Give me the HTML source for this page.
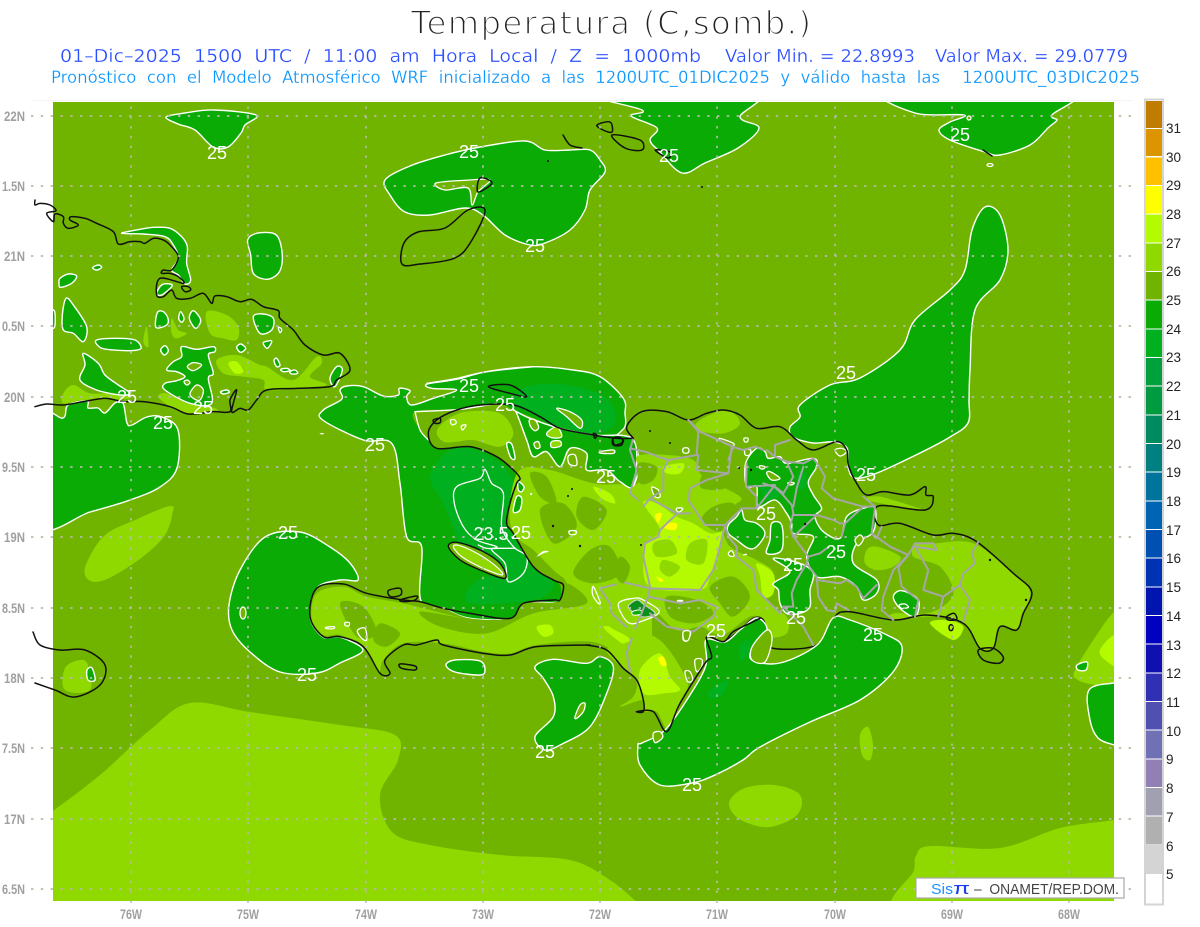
<!DOCTYPE html>
<html><head><meta charset="utf-8"><title>Temperatura</title>
<style>
html,body{margin:0;padding:0;background:#fff;width:1200px;height:927px;overflow:hidden}
svg{display:block}
text{font-family:"Liberation Sans",sans-serif}
.st text{font-family:"DejaVu Sans","Liberation Sans",sans-serif;white-space:pre}
polygon,polyline,circle,ellipse,path{vector-effect:non-scaling-stroke;stroke-linejoin:round;stroke-linecap:round}
.c{fill:#0aab05;stroke:#fff;stroke-width:1.4}
.h{fill:#70b400;stroke:#fff;stroke-width:1.3}
.s{fill:#00b01e;stroke:none}
.o{fill:#70b400;stroke:none}
.l{fill:#8fd900;stroke:none}
.b{fill:#b4fa00;stroke:none}
.y{fill:#ffff00;stroke:none}
.w{fill:none;stroke:#fff;stroke-width:1.3}
.k{fill:none;stroke:#111;stroke-width:1.5}
.g{fill:none;stroke:#a6a6a6;stroke-width:2}
.ax{fill:#a0a0a0;font-size:13.5px;font-weight:bold}
.cb{fill:#222;font-size:13.5px}
.lb{fill:#fff;font-size:18px;text-anchor:middle}
.dot{stroke:#b5bba8;stroke-width:1.7;stroke-dasharray:2.4 7.4;fill:none}
</style></head><body>
<svg width="1200" height="927" viewBox="0 0 1200 927" xmlns="http://www.w3.org/2000/svg">
<defs><clipPath id="p"><rect x="53" y="102" width="1061" height="799"/></clipPath></defs>

<!-- titles -->
<g class="st">
<text x="411" y="34" font-size="32" fill="#222" stroke="#fff" stroke-width="1.4" textLength="400" lengthAdjust="spacing">Temperatura (C,somb.)</text>
<g font-size="18" fill="#2a4dff" stroke="#fff" stroke-width=".3">
<text x="60" y="62" textLength="641" lengthAdjust="spacingAndGlyphs">01–Dic–2025  1500  UTC  /  11:00  am  Hora  Local  /  Z  =  1000mb</text>
<text x="725" y="62" textLength="190" lengthAdjust="spacingAndGlyphs">Valor Min. = 22.8993</text>
<text x="935" y="62" textLength="193" lengthAdjust="spacingAndGlyphs">Valor Max. = 29.0779</text>
</g>
<g font-size="16.5" fill="#0a96ff" stroke="#fff" stroke-width=".25">
<text x="51" y="83" textLength="889" lengthAdjust="spacingAndGlyphs">Pronóstico  con  el  Modelo  Atmosférico  WRF  inicializado  a  las  1200UTC_01DIC2025  y  válido  hasta  las</text>
<text x="962" y="83" textLength="178" lengthAdjust="spacingAndGlyphs">1200UTC_03DIC2025</text>
</g>
</g>

<line x1="33" y1="100.5" x2="1132" y2="100.5" stroke="#f3f3f3"/>

<g clip-path="url(#p)">
<rect x="53" y="102" width="1061" height="799" fill="#70b400"/>
<!-- broad warm areas -->
<polygon class="l" points="40,820 53,811 100,775 150,730 190,703 250,712 340,725 395,735 398,760 380,795 392,832 430,845 500,855 570,860 610,880 640,905 650,915 40,915"/>
<polygon class="l" points="905,915 914,870 916,856 930,846 1000,848 1060,828 1114,820 1130,815 1130,915"/>
<polygon class="l" points="85,575 88,560 105,535 135,520 170,506 172,515 165,535 145,555 115,575 95,582"/>
<polygon class="l" points="730,800 745,788 775,785 800,795 797,815 770,827 745,822 732,812"/>
<polygon class="l" points="860,735 868,727 873,745 870,760 862,755"/>
<polygon class="l" points="1075,670 1100,630 1114,612 1130,600 1130,690 1095,685 1078,680"/>
<polygon class="b" points="1100,650 1114,635 1125,640 1125,670 1105,660"/>
<polygon class="l" points="65,668 80,660 88,665 90,690 65,690"/>

<!-- open-sea contour blobs -->
<polygon class="c" points="166,117 185,113 214,110 256,115 245,125 241,133 228,147 213,147 195,130 178,124"/>
<polygon class="c" points="385,180 410,166 445,155 480,147 525,141 545,150 570,150 590,150 600,160 605,172 590,190 585,210 570,230 545,243 530,245 505,235 483,215 465,208 430,215 405,212 390,195"/>
<polygon class="h" points="436,183 470,180 490,180 478,192 472,205 468,188 445,190"/>
<polygon class="c" points="590,92 642,110 631,116 657,128 650,140 660,152 682,173 705,163 738,148 759,128 740,117 753,92"/>
<polygon class="c" points="890,92 915,113 964,115 950,122 939,130 950,140 985,152 1000,155 1030,145 1048,128 1057,120 1052,115 1068,92"/>
<circle class="h" cx="969" cy="118" r="2"/>
<ellipse class="h" cx="990" cy="165" rx="3" ry="1.5"/>
<polygon class="c" points="848,467 855,478 877,473 920,453 950,437 968,423 969,400 970,370 975,310 1000,280 1008,250 1000,215 985,207 972,230 965,270 950,290 915,320 900,350 860,378 830,385 800,405 800,417 790,427 793,437 813,443 833,442 847,448"/>
<polygon class="c" points="40,418 63,418 68,405 87,401 88,408 98,408 105,413 115,403 123,403 127,423 132,425 147,417 162,417 178,430 177,468 160,487 130,500 90,512 40,525"/>
<polygon class="c" points="300,532 330,547 350,563 358,580 340,580 317,588 310,617 323,637 340,637 363,650 340,663 317,673 280,672 250,652 232,630 229,605 240,570 265,537"/>
<ellipse class="h" cx="243" cy="613" rx="3" ry="6"/>
<polygon class="c" points="446,665 455,660 480,661 485,670 480,675 455,672"/>
<polygon class="c" points="1089,690 1114,683 1130,683 1130,750 1114,745 1098,738 1090,720"/>
<polygon class="c" points="1077,665 1087,662 1086,670 1078,670"/>
<polygon class="c" points="87,670 92,668 95,680 88,680"/>

<!-- Western Cuba area -->
<g transform="translate(30,190) scale(.33333)">
<polygon class="l" points="530,365 590,375 625,410 620,450 580,445 540,430"/>
<polygon class="l" points="425,385 445,420 470,430 440,445 425,430"/>
<polygon class="l" points="350,410 355,470 340,455"/>
<polygon class="l" points="560,510 620,495 690,525 710,530 790,570 860,500 875,520 840,560 890,585 800,595 710,600 700,570 640,560 580,550"/>
<polygon class="b" points="595,520 620,515 640,545 615,550"/>
<polygon class="l" points="100,610 130,585 180,610 250,610 300,625 160,630 100,640"/>
<polygon class="l" points="385,620 410,610 470,640 540,650 560,665 470,672 420,650"/>
<polygon class="c" points="275,130 320,120 370,112 420,115 455,140 472,170 470,220 482,270 465,282 445,255 425,240 445,205 430,165 405,140 340,132"/>
<polygon class="c" points="653,150 680,130 730,130 750,155 757,210 745,250 710,268 670,250 662,195"/>
<polygon class="c" points="90,265 115,252 140,258 125,280 92,292 87,280"/>
<polygon class="c" points="188,233 205,225 215,232 200,240"/>
<polygon class="c" points="97,375 108,325 130,345 170,410 160,455 130,430 100,420"/>
<polygon class="c" points="200,450 260,445 315,450 333,475 300,482 230,478 205,468"/>
<polygon class="c" points="378,412 382,368 400,365 414,385 410,405"/>
<polygon class="c" points="452,365 462,385 455,397 446,385"/>
<polygon class="c" points="490,362 512,390 497,415 478,385"/>
<polygon class="c" points="392,480 405,467 415,482 403,495"/>
<polygon class="c" points="455,470 500,478 550,470 555,485 535,495 550,550 535,565 545,640 480,640 405,600 405,580 440,572 465,560 440,545 410,540 430,515 455,500"/>
<polygon class="h" points="472,530 490,518 515,525 490,542"/>
<polygon class="h" points="480,610 500,585 520,600 510,630 490,625"/>
<polygon class="h" points="462,575 472,570 480,578 470,585"/>
<polygon class="c" points="572,605 590,600 598,607 580,612"/>
<polygon class="c" points="620,472 632,462 647,475 632,487"/>
<polygon class="c" points="670,380 700,372 730,385 725,420 690,430"/>
<polygon class="c" points="745,412 755,418 750,428"/>
<polygon class="c" points="700,458 725,453 712,475"/>
<polygon class="c" points="732,512 740,505 750,525 740,530"/>
<polygon class="c" points="752,538 770,535 780,542 760,545"/>
<polygon class="c" points="780,545 795,540 803,550 785,552"/>
<polygon class="c" points="900,565 920,530 937,540 915,590"/>
<polygon class="c" points="380,310 395,285 420,282 425,290 395,315"/>
<polygon class="c" points="160,490 205,520 225,555 265,585 300,610 270,615 200,600 150,570 165,525"/>
<polygon class="c" points="60,365 74,365 74,410 60,410"/>
</g>

<!-- Haiti + gulf -->
<g transform="translate(300,370) scale(.33333)">
<polygon class="c" points="68,150 70,120 125,88 120,60 140,48 190,50 250,78 295,75 298,55 330,62 320,80 335,105 400,85 470,60 395,55 382,42 470,28 560,5 700,-10 820,0 900,20 970,85 975,130 975,170 945,205 1000,210 1000,350 800,650 782,695 670,700 640,745 510,745 430,715 362,690 365,530 320,500 300,340 275,220 190,210"/>
<polygon class="s" points="640,100 680,50 800,45 920,85 945,160 880,190 780,170 700,130"/>
<polygon class="s" points="390,320 450,240 530,240 610,290 640,350 620,450 680,560 760,640 700,690 510,700 510,650 560,620 610,620 540,590 440,530 470,510 430,400"/>
<polygon class="w" points="470,350 540,325 555,298 575,340 610,370 605,470 640,530 680,560 670,610 625,635 615,580 575,540 590,530 530,510 490,470 463,400"/>
<polyline class="w" points="535,525 560,535 600,535 645,535"/>
<polygon class="h" points="770,115 810,125 845,150 840,175 800,140"/>
<polygon fill="#70b400" stroke="none" points="345,125 480,118 590,100 640,120 690,140 780,175 880,195 1000,210 1010,300 990,370 1030,400 1010,500 945,520 985,540 1000,630 1050,650 1050,960 1000,960 960,860 870,825 710,830 630,855 550,850 430,825 410,810 310,825 255,870 270,910 240,910 190,830 120,800 70,800 30,740 50,655 130,642 200,670 310,690 360,695 430,715 510,745 630,745 670,700 770,695 782,650 760,630 700,590 640,490 620,460 630,400 650,340 640,300 590,260 510,230 410,235 385,210 360,180"/>
<polyline class="w" points="345,125 480,118 590,100"/>
<polyline class="w" points="345,125 360,180 385,210"/>
<polygon class="l" points="410,185 440,150 500,125 600,130 640,190 600,230 520,210 470,215 430,215"/>
<polygon class="l" points="660,300 750,300 880,340 1000,350 1040,420 1020,500 945,520 985,540 1000,630 1050,650 1050,900 1000,900 950,850 870,815 710,825 630,850 550,845 430,820 310,820 250,870 235,905 190,830 120,795 70,795 35,745 50,670 130,650 200,680 310,700 500,745 640,755 700,705 780,700 800,640 760,600 700,540 640,490 630,400"/>
<polygon class="o" points="360,725 500,745 640,755 700,705 780,700 800,640 860,700 700,730 560,790 420,770"/>
<polygon class="o" points="720,420 790,400 830,470 760,520"/>
<polygon class="o" points="850,380 920,420 880,480 830,440"/>
<polygon class="o" points="120,700 190,710 230,790 170,800"/>
<polygon class="o" points="690,310 740,320 770,400 720,380"/>
<polygon class="o" points="870,540 930,530 960,610 880,640 820,610"/>
<polygon class="o" points="240,760 300,790 260,830 220,810"/>
<polygon class="b" points="710,770 750,765 760,790 730,800"/>
<polygon class="b" points="880,350 930,370 945,400 905,385"/>
<polygon class="b" points="910,770 1000,790 1030,840 980,830"/>
<polygon class="c" points="640,120 690,145 780,175 880,195 1000,210 1000,345 960,335 920,300 860,300 860,250 810,235 780,290 740,245 700,260 680,210 650,130"/>
<polygon class="h" points="688,150 705,150 716,172 705,182 692,170"/>
<polygon class="h" points="702,220 715,215 720,232 708,235"/>
<polygon class="l" style="stroke:#fff;stroke-width:1.3" points="740,190 770,170 785,200 755,203"/>
<polygon class="l" style="stroke:#fff;stroke-width:1.3" points="755,215 780,213 782,228 755,232"/>
<polygon class="h" points="805,258 825,255 830,285 808,282"/>
<polygon class="h" points="900,245 940,240 940,250 905,250"/>
<polygon class="c" points="620,222 635,222 645,265 632,262"/>
<polygon class="c" points="655,335 672,350 665,365 655,360"/>
<polygon class="c" points="650,380 665,385 660,420 640,425"/>
<polygon class="w" points="452,150 465,150 468,160 455,164"/>
<polygon class="w" points="484,168 498,165 488,180"/>
<polygon class="w" points="135,758 148,758 146,768 135,766"/>
<polygon class="w" points="78,772 102,770 100,776 80,776"/>
<polygon class="w" points="172,782 195,775 200,810 185,805"/>
<polygon class="w" points="808,483 828,483 826,493 810,493"/>
<polygon fill="#fff" points="710,560 730,543 747,545 730,550"/>
<polygon fill="#fff" points="690,370 697,370 693,376"/>
<polygon fill="#fff" points="60,190 70,189 70,193 60,192"/>
<polygon class="w" points="880,650 900,695 895,700 878,675"/>
<polyline class="w" points="380,40 470,25 560,5 700,-10"/>
<!-- Gonave -->
<polygon fill="#70b400" stroke="#111" stroke-width="1.4" points="445,530 470,517 540,540 600,580 615,625 540,600 480,570"/>
<polygon class="l" style="stroke:#fff;stroke-width:1.2" points="460,530 480,527 540,555 595,595 605,615 545,593 485,560"/>
<!-- coast -->
<polyline class="k" points="1000,205 950,205 880,195 780,175 720,140 640,105 540,105 470,120 410,150 385,190 410,235 510,230 590,260 640,300 660,325 650,340 630,400 620,460 640,490 700,590 760,630 790,645 780,690 760,690 670,700 630,745 510,730 430,715 360,695 310,690 200,670 130,642 50,655 30,740 70,800 120,800 190,830 240,910 270,910 255,870 310,825 350,825 410,810 430,825 550,850 630,855 710,830 870,825"/>
<polygon class="k" points="565,50 630,45 680,80 630,70"/>
<polygon class="k" points="265,662 300,655 302,675 272,680"/>
<polygon class="k" points="300,690 350,678 345,690 315,695"/>
<polygon class="k" points="300,882 345,888 345,900 305,895"/>
<polygon class="k" points="400,150 420,145 420,158 405,160"/>
<polygon class="k" points="940,205 965,205 965,225 940,225"/>
<polygon class="k" points="880,190 890,195 885,205"/>
<!-- Border Haiti/DR -->
<polyline class="g" points="1000,205 990,240 1010,300 990,370 1030,400 1010,500 945,520 985,540 1000,630 900,655 930,700 935,730 1000,790 985,850 1020,960"/>
</g>

<!-- Dominican Rep -->
<g transform="translate(600,400) scale(.33333)">
<polygon class="l" points="95,270 130,230 110,170 200,165 280,180 310,230 420,290 400,320 370,375 390,440 470,480 520,520 500,600 560,650 560,700 510,710 490,660 450,650 380,700 340,700 300,680 230,690 160,630 80,600 50,550 85,490 45,430 85,390 125,320"/>
<polygon class="o" points="305,360 340,320 400,310 390,360 355,395"/>
<polygon class="o" points="330,560 400,530 450,590 400,650 360,610"/>
<polygon class="o" points="115,190 170,200 160,240 120,250"/>
<polygon class="o" points="200,590 290,600 340,640 280,670 210,650"/>
<polygon class="o" points="60,470 90,500 70,550 45,520"/>
<polygon class="o" points="320,215 400,250 350,270 300,260"/>
<polygon class="b" points="130,310 170,310 230,350 280,370 330,400 370,400 350,470 330,530 300,570 150,560 130,470 135,430 180,390"/>
<polygon class="b" points="190,200 250,190 240,220 200,220"/>
<polygon class="b" points="470,490 480,530 490,590 520,580 520,520"/>
<polygon class="l" points="190,480 240,500 210,530 180,510"/>
<polygon class="l" points="270,430 320,420 310,490 260,480"/>
<polygon class="l" points="160,430 210,420 230,460 170,470"/>
<polygon class="y" points="165,345 185,340 175,370"/>
<polygon class="y" points="195,370 230,370 225,390 195,385"/>
<polygon class="y" points="170,530 190,540 180,545"/>
<polygon class="l" points="300,60 380,30 420,70 370,100 290,90"/>
<polygon class="l" points="800,300 840,290 970,330 900,320"/>
<polygon class="l" points="800,450 830,440 900,470 880,500 830,510 795,490"/>
<polygon class="l" points="950,430 1000,430 1120,430 1240,520 1290,575 1270,640 1250,690 1200,680 1180,740 1140,745 1090,670 990,650 880,660 880,640 980,640 1040,610 1060,570 1020,500 940,470"/>
<polygon class="b" points="990,670 1040,660 1090,680 1060,720"/>
<!-- green interiors -->
<polygon class="c" points="437,190 470,145 495,155 505,175 540,170 560,190 640,175 650,200 625,245 640,285 665,325 645,350 670,395 720,415 740,350 790,325 825,325 820,395 770,430 760,490 830,540 830,580 790,600 770,560 720,530 650,530 620,470 640,410 580,400 575,370 560,340 525,300 475,320 470,260 440,260"/>
<polygon class="s" points="480,260 520,255 540,285 500,300"/>
<polygon class="s" points="590,230 610,210 620,250 600,270"/>
<polygon class="c" points="385,375 410,350 425,330 435,360 470,370 495,400 470,440 445,445 410,420 385,400"/>
<polygon class="c" points="515,370 545,375 545,450 500,460 510,420"/>
<polygon class="c" points="520,475 600,490 640,520 630,570 630,620 600,640 560,640 540,610 535,570 520,550 570,515"/>
<polygon class="c" points="880,590 905,572 955,600 945,650 900,625"/>
<polygon class="w" points="898,615 915,612 925,622 905,625"/>
<polygon class="h" points="765,420 780,405 790,418 775,437"/>
<polygon class="h" points="705,150 725,145 740,155 720,168"/>
<polygon class="h" points="510,215 540,235 515,240 500,220"/>
<polygon class="h" points="480,197 495,200 490,207 480,205"/>
<polygon class="h" points="565,248 582,248 578,254 566,254"/>
<polygon class="h" points="360,115 400,130 395,138 365,125"/>
<polygon class="h" points="250,145 265,145 265,158 250,158"/>
<polygon class="h" points="432,115 444,115 442,125 434,125"/>
<polygon class="h" points="155,262 175,270 180,290 165,290"/>
<polygon class="h" points="230,325 248,325 240,335 232,334"/>
<polygon class="h" points="385,460 395,452 402,468 390,468"/>
<polygon class="h" points="250,700 262,690 272,700 262,722 250,720"/>
<polygon class="h" points="435,150 452,150 448,165 436,165"/>
<polygon fill="#fff" points="430,463 440,461 440,465 430,466"/>
<polygon fill="#fff" points="232,600 248,600 248,605 232,605"/>
<!-- Lake Enriquillo -->
<polygon class="l" style="stroke:#fff;stroke-width:1.3" points="55,612 100,595 130,600 178,635 130,662 85,668"/>
<polygon points="85,622 110,600 130,612 165,640 125,650" fill="#0b8f1c" stroke="#c8d8c0" stroke-width="1.2"/>
<polygon points="97,635 120,630 125,642 100,645" fill="#0aab05" stroke="#fff" stroke-width="1"/>
<!-- north-east white contour & coast -->
<polygon class="k" points="1040,650 1062,640 1070,658 1045,660"/>
<ellipse class="k" cx="1053" cy="683" rx="6" ry="9"/>
<polygon class="k" points="1135,750 1180,745 1210,772 1195,790 1150,780"/>
<polygon class="k" points="40,115 60,112 70,125 45,135"/>
<polyline class="k" points="100,115 80,80 125,35 200,35 265,60 320,40 370,30 420,45 470,85 540,80 590,120 640,150 710,125 740,150 745,195 770,250 800,285 850,275 930,285 975,260 978,285 1000,290 975,330 835,318 835,375 900,370 1000,405 1060,400 1130,425 1240,520 1295,575 1270,640 1250,690 1200,680 1180,745 1140,745 1090,670 980,645 880,660 745,635 700,655 650,735 520,745 505,710 490,660 460,655 420,690 375,725"/>
<!-- provinces -->
<polyline class="g" points="90,145 135,155 175,170 205,180 290,165 295,95 265,60"/>
<polyline class="g" points="205,180 190,210 190,270 150,295 130,320"/>
<polyline class="g" points="295,165 290,210 385,220 395,140 430,150 465,140 490,150"/>
<polyline class="g" points="265,60 300,95 400,140 385,180"/>
<polyline class="g" points="385,220 320,240 270,265 265,300 315,375 375,375"/>
<polyline class="g" points="150,295 230,340 270,340"/>
<polyline class="g" points="232,340 180,390 175,410 135,430 130,470 150,560 145,590 100,700 75,810"/>
<polyline class="g" points="150,565 300,570 340,510 360,440 375,375"/>
<polyline class="g" points="375,375 385,410 410,440 410,470 460,510 470,570 540,640 550,620 610,680 640,735"/>
<polyline class="g" points="75,548 150,565"/>
<polyline class="g" points="145,590 240,610 300,600 350,620 340,650 280,695 250,690 200,680 150,640"/>
<polyline class="g" points="375,375 425,325 470,325 525,255 440,260 470,290 470,325"/>
<polyline class="g" points="440,190 438,260"/>
<polyline class="g" points="490,250 525,262 545,280 575,315 580,340 570,380 580,410 610,450 625,470 620,490 590,540 575,580 580,620 550,620"/>
<polyline class="g" points="500,150 525,170 525,135 570,120"/>
<polyline class="g" points="525,170 560,185 610,190 640,175 655,195 675,230 665,265 700,295 790,320 820,320"/>
<polyline class="g" points="610,200 590,265 580,320"/>
<polyline class="g" points="525,260 550,280 580,230 560,185"/>
<polyline class="g" points="580,345 650,345 700,360 720,370 735,370 790,320"/>
<polyline class="g" points="650,345 580,410"/>
<polyline class="g" points="735,370 725,410"/>
<polyline class="g" points="790,290 825,320 815,400 870,440 925,465 880,510 850,590 845,630 880,660"/>
<polyline class="g" points="815,400 830,415 845,380"/>
<polyline class="g" points="625,470 660,460 680,445"/>
<polyline class="g" points="620,490 650,530 655,590 680,630 705,635 710,610 745,630"/>
<polyline class="g" points="650,540 720,550 740,540 770,560 790,595 830,555"/>
<polyline class="g" points="925,465 895,500 905,560 955,600 945,650"/>
<polyline class="g" points="925,465 945,430 1000,430 1010,450 945,440 985,510 970,570 1030,590 1015,650"/>
<polyline class="g" points="1030,590 1080,555 1110,600 1090,665"/>
<polyline class="g" points="1080,555 1090,520 1125,490 1115,460 1135,425"/>
</g>

<!-- South of Barahona + blobs -->
<g transform="translate(520,600) scale(.33333)">
<polygon class="l" points="270,80 350,90 430,130 500,240 490,290 445,385 410,335 370,335 370,300 300,320 340,290 350,240 310,205 260,150 330,120"/>
<polygon class="b" points="360,210 420,160 450,230 480,270 430,280 370,280"/>
<polygon class="y" points="415,175 430,170 440,195 425,197"/>
<polygon class="c" points="45,200 100,178 200,190 240,170 280,200 260,280 210,380 130,430 75,450 45,410 100,350 100,290 70,235"/>
<polygon class="h" points="165,350 180,315 195,310 190,335 170,355"/>
<polygon class="h" points="495,215 510,215 518,240 503,245"/>
<polygon class="h" points="525,180 545,178 545,200 530,215"/>
<polygon class="h" points="490,95 510,95 505,120 492,120"/>
<polyline class="g" points="335,115 320,160 330,215"/>
</g>
<polygon class="c" points="706,640 725,642 740,630 757,618 767,630 753,647 752,660 780,663 817,645 833,618 850,620 887,635 902,647 893,672 860,700 810,722 760,747 743,760 715,775 692,783 660,785 640,765 638,745 642,743 665,730 690,695 706,665"/>
<polygon class="s" points="740,645 750,640 748,655 740,660"/>
<polygon class="s" points="710,690 728,680 722,695 710,698"/>
<polygon class="h" points="752,647 767,630 772,640 765,662 752,660"/>
<g transform="translate(520,600) scale(.33333)">
<polygon class="h" points="400,400 420,395 428,412 405,428"/>
<polyline class="k" points="200,135 260,150 310,205 350,240 370,300 370,335 350,335 400,335 440,395 480,310 555,190 575,170 560,110 610,125 640,95 700,65 720,55"/>
</g>

<!-- dots (small black lakes) -->
<g fill="#111">
<circle cx="548" cy="161" r="1"/><circle cx="702" cy="187" r="1"/><circle cx="572" cy="489" r="1"/>
<circle cx="580" cy="546" r="1.2"/><circle cx="568" cy="496" r="1"/><circle cx="650" cy="431" r="1"/>
<circle cx="670" cy="443" r="1"/><circle cx="739" cy="468" r="1"/><circle cx="751" cy="470" r="1.2"/>
<circle cx="805" cy="524" r="1.2"/><circle cx="990" cy="560" r="1.2"/><circle cx="1026" cy="600" r="1.2"/>
<circle cx="641" cy="545" r="1"/><circle cx="553" cy="526" r="1.2"/>
</g>
<!-- Bahamas/Turks islands -->
<polygon class="k" points="402,264 404,243 418,232 445,228 468,210 485,210 472,240 455,258 420,264"/>
<polygon class="k" points="478,192 492,183 480,178"/>
<polygon class="k" points="597,125 610,122 612,132 603,130"/>
<polygon class="k" points="612,135 640,140 642,150 625,148"/>
<polygon class="k" points="655,150 670,152 668,158"/>
<polyline class="k" points="563,135 570,145 582,148"/>
<polyline class="k" points="983,150 992,156"/>
</g>
<polyline class="k" points="33,632 40,645 60,650 85,650 105,665 100,685 75,697 55,690 35,683"/>

<!-- Cuba coast -->
<g transform="translate(30,190) scale(.33333)">
<polyline class="k" points="15,30 15,45 30,40 60,45 78,62 50,70 70,95 75,72 100,80 100,100 115,115 145,105 120,90 125,80 165,85 200,100 250,125 265,162 300,155 330,155 345,160 370,145 400,150 420,165 445,200 425,240 400,240 395,250 420,250 445,260 460,280 390,265 380,315 400,320 425,300 440,325 480,325 520,310 545,340 555,318 590,320 630,335 665,328 700,350 745,362 750,385 790,420 825,465 880,495 930,490 960,540 920,570 900,590 800,595 710,600 680,630 655,660 630,655 605,665 620,600 600,630 600,665 550,665 475,672 420,650 340,635 280,635 225,625 160,635 100,645 50,642 15,650"/>
<polygon class="k" points="455,290 475,290 482,300 465,305"/>
</g>

<!-- grid -->
<g class="dot">
<line x1="31" x2="1134" y1="116" y2="116"/><line x1="31" x2="1134" y1="186" y2="186"/>
<line x1="31" x2="1134" y1="256" y2="256"/><line x1="31" x2="1134" y1="326" y2="326"/>
<line x1="31" x2="1134" y1="397" y2="397"/><line x1="31" x2="1134" y1="467" y2="467"/>
<line x1="31" x2="1134" y1="537" y2="537"/><line x1="31" x2="1134" y1="608" y2="608"/>
<line x1="31" x2="1134" y1="678" y2="678"/><line x1="31" x2="1134" y1="748" y2="748"/>
<line x1="31" x2="1134" y1="819" y2="819"/><line x1="31" x2="1134" y1="889" y2="889"/>
<line x1="131" x2="131" y1="106.5" y2="907"/><line x1="248" x2="248" y1="106.5" y2="907"/>
<line x1="366" x2="366" y1="106.5" y2="907"/><line x1="483" x2="483" y1="106.5" y2="907"/>
<line x1="600" x2="600" y1="106.5" y2="907"/><line x1="717" x2="717" y1="106.5" y2="907"/>
<line x1="835" x2="835" y1="106.5" y2="907"/><line x1="952" x2="952" y1="106.5" y2="907"/>
<line x1="1069" x2="1069" y1="106.5" y2="907"/>
</g>

<!-- contour labels -->
<g class="lb">
<text x="217" y="159">25</text><text x="469" y="158">25</text><text x="669" y="162">25</text>
<text x="960" y="141">25</text><text x="535" y="252">25</text><text x="127" y="403">25</text>
<text x="203" y="414">25</text><text x="163" y="429">25</text><text x="375" y="451">25</text>
<text x="469" y="392">25</text><text x="505" y="411">25</text><text x="606" y="483">25</text>
<text x="866" y="481">25</text><text x="846" y="379">25</text><text x="766" y="520">25</text>
<text x="836" y="558">25</text><text x="793" y="571">25</text><text x="796" y="624">25</text>
<text x="716" y="637">25</text><text x="873" y="641">25</text><text x="521" y="539">25</text>
<text x="288" y="539">25</text><text x="307" y="681">25</text><text x="545" y="758">25</text>
<text x="692" y="791">25</text><text x="491" y="540">23.5</text>
</g>

<!-- y axis -->
<g class="ax">
<text x="4" y="121" textLength="21" lengthAdjust="spacingAndGlyphs">22N</text>
<text x="2" y="191" textLength="23" lengthAdjust="spacingAndGlyphs">1.5N</text>
<text x="4" y="261" textLength="21" lengthAdjust="spacingAndGlyphs">21N</text>
<text x="2" y="331" textLength="23" lengthAdjust="spacingAndGlyphs">0.5N</text>
<text x="4" y="402" textLength="21" lengthAdjust="spacingAndGlyphs">20N</text>
<text x="2" y="472" textLength="23" lengthAdjust="spacingAndGlyphs">9.5N</text>
<text x="4" y="542" textLength="21" lengthAdjust="spacingAndGlyphs">19N</text>
<text x="2" y="613" textLength="23" lengthAdjust="spacingAndGlyphs">8.5N</text>
<text x="4" y="683" textLength="21" lengthAdjust="spacingAndGlyphs">18N</text>
<text x="2" y="753" textLength="23" lengthAdjust="spacingAndGlyphs">7.5N</text>
<text x="4" y="824" textLength="21" lengthAdjust="spacingAndGlyphs">17N</text>
<text x="2" y="894" textLength="23" lengthAdjust="spacingAndGlyphs">6.5N</text>
<text x="120" y="919" textLength="22" lengthAdjust="spacingAndGlyphs">76W</text>
<text x="237" y="919" textLength="22" lengthAdjust="spacingAndGlyphs">75W</text>
<text x="355" y="919" textLength="22" lengthAdjust="spacingAndGlyphs">74W</text>
<text x="472" y="919" textLength="22" lengthAdjust="spacingAndGlyphs">73W</text>
<text x="589" y="919" textLength="22" lengthAdjust="spacingAndGlyphs">72W</text>
<text x="706" y="919" textLength="22" lengthAdjust="spacingAndGlyphs">71W</text>
<text x="824" y="919" textLength="22" lengthAdjust="spacingAndGlyphs">70W</text>
<text x="941" y="919" textLength="22" lengthAdjust="spacingAndGlyphs">69W</text>
<text x="1058" y="919" textLength="22" lengthAdjust="spacingAndGlyphs">68W</text>
</g>

<!-- colour bar -->
<rect x="1145" y="99.5" width="18" height="805" fill="#fff" stroke="#d4d4d4" stroke-width="2"/>
<g>
<rect x="1146" y="101" width="16" height="27" fill="#c07c00"/>
<rect x="1146" y="129" width="16" height="27" fill="#dc9500"/>
<rect x="1146" y="157.500" width="16" height="27.500" fill="#ffc000"/>
<rect x="1146" y="186" width="16" height="27.500" fill="#ffff00"/>
<rect x="1146" y="214.500" width="16" height="28" fill="#b4fa00"/>
<rect x="1146" y="243.500" width="16" height="27.500" fill="#8fd900"/>
<rect x="1146" y="272" width="16" height="27.500" fill="#70b400"/>
<rect x="1146" y="300.500" width="16" height="28" fill="#0aab05"/>
<rect x="1146" y="329.500" width="16" height="27.500" fill="#00b01e"/>
<rect x="1146" y="358" width="16" height="27.500" fill="#00a03c"/>
<rect x="1146" y="386.500" width="16" height="28" fill="#009a40"/>
<rect x="1146" y="415.500" width="16" height="27.500" fill="#008a60"/>
<rect x="1146" y="444" width="16" height="27.500" fill="#008080"/>
<rect x="1146" y="472.500" width="16" height="28" fill="#00749a"/>
<rect x="1146" y="501.500" width="16" height="27.500" fill="#0064b4"/>
<rect x="1146" y="530" width="16" height="27.500" fill="#0050b4"/>
<rect x="1146" y="558.500" width="16" height="28" fill="#0032b4"/>
<rect x="1146" y="587.500" width="16" height="27.500" fill="#0014b0"/>
<rect x="1146" y="616" width="16" height="27.500" fill="#0000c0"/>
<rect x="1146" y="644.500" width="16" height="28" fill="#1010b0"/>
<rect x="1146" y="673.500" width="16" height="27.500" fill="#3030b4"/>
<rect x="1146" y="702" width="16" height="27.500" fill="#5050b0"/>
<rect x="1146" y="730.500" width="16" height="28" fill="#7070b4"/>
<rect x="1146" y="759.500" width="16" height="27.500" fill="#9080b4"/>
<rect x="1146" y="788" width="16" height="27.500" fill="#a0a0b0"/>
<rect x="1146" y="816.500" width="16" height="28" fill="#b0b0b0"/>
<rect x="1146" y="845" width="16" height="29" fill="#d4d4d4"/>
<rect x="1146" y="874" width="16" height="29" fill="#ffffff"/>
</g>
<g class="cb">
<text x="1166" y="133">31</text><text x="1166" y="162">30</text><text x="1166" y="190">29</text>
<text x="1166" y="219">28</text><text x="1166" y="248">27</text><text x="1166" y="276">26</text>
<text x="1166" y="305">25</text><text x="1166" y="334">24</text><text x="1166" y="362">23</text>
<text x="1166" y="391">22</text><text x="1166" y="420">21</text><text x="1166" y="449">20</text>
<text x="1166" y="477">19</text><text x="1166" y="506">18</text><text x="1166" y="535">17</text>
<text x="1166" y="563">16</text><text x="1166" y="592">15</text><text x="1166" y="621">14</text>
<text x="1166" y="650">13</text><text x="1166" y="678">12</text><text x="1166" y="707">11</text>
<text x="1166" y="736">10</text><text x="1166" y="764">9</text><text x="1166" y="793">8</text>
<text x="1166" y="822">7</text><text x="1166" y="851">6</text><text x="1166" y="879">5</text>
</g>

<!-- watermark -->
<rect x="916" y="878" width="208" height="20" fill="#fff" stroke="#aaa" stroke-width="1.2"/>
<text x="931" y="894" font-size="15" fill="#1e90ff" textLength="22" lengthAdjust="spacingAndGlyphs">Sis</text>
<text x="953" y="894" font-size="17" fill="#1a3cf0" textLength="17" lengthAdjust="spacingAndGlyphs">π</text>
<text x="974" y="894" font-size="14.500" fill="#444" textLength="145" lengthAdjust="spacingAndGlyphs" style="white-space:pre">–  ONAMET/REP.DOM.</text>
</svg>
<script>
(function(){
var NS="http://www.w3.org/2000/svg";
var els=document.querySelectorAll("polygon,polyline");
for(var i=0;i<els.length;i++){
  var e=els[i];
  if(e.classList.contains("g"))continue;
  var closed=e.tagName==="polygon";
  var n=e.getAttribute("points").trim().split(/\s+/).map(function(s){var a=s.split(",");return[+a[0],+a[1]];});
  var L=n.length;
  if(L<3)continue;
  var at=function(k){
    if(closed)return n[(k+L)%L];
    return n[Math.max(0,Math.min(L-1,k))];
  };
  var d="M"+n[0][0]+" "+n[0][1];
  var segs=closed?L:L-1;
  for(var k=0;k<segs;k++){
    var p0=at(k-1),p1=at(k),p2=at(k+1),p3=at(k+2);
    var c1x=p1[0]+(p2[0]-p0[0])/6,c1y=p1[1]+(p2[1]-p0[1])/6;
    var c2x=p2[0]-(p3[0]-p1[0])/6,c2y=p2[1]-(p3[1]-p1[1])/6;
    d+="C"+c1x.toFixed(1)+" "+c1y.toFixed(1)+" "+c2x.toFixed(1)+" "+c2y.toFixed(1)+" "+p2[0]+" "+p2[1];
  }
  if(closed)d+="Z";
  var pa=document.createElementNS(NS,"path");
  for(var a=0;a<e.attributes.length;a++){
    var at2=e.attributes[a];
    if(at2.name!=="points")pa.setAttribute(at2.name,at2.value);
  }
  pa.setAttribute("d",d);
  e.parentNode.replaceChild(pa,e);
}
})();
</script>
</body></html>
